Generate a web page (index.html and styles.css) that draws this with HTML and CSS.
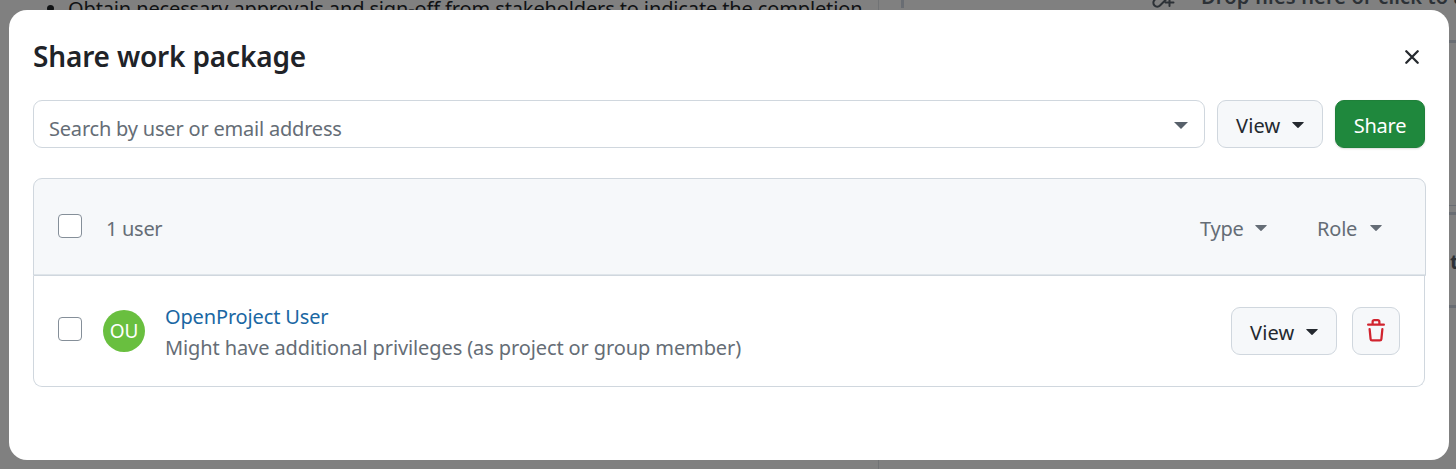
FILE: index.html
```
<!DOCTYPE html>
<html lang="en">
<head>
<meta charset="utf-8">
<title>Share work package</title>
<link rel="stylesheet" href="styles.css">
</head>
<body>
<div class="page">
  <div class="description">
    <ul class="description-list"><li><span class="description-text">Obtain necessary approvals and sign-off from stakeholders to indicate the completion</span></li></ul>
  </div>
  <div class="files">
    <div class="dropzone">
      <svg class="clip" width="26" height="26" viewBox="0 0 26 26" fill="none" stroke="currentColor" stroke-width="2" stroke-linecap="round"><path d="M14 8 L4.5 18 a3.8 3.8 0 0 0 5.5 5.5 L18 15.5 M19.5 17 v7 M15.5 20.5 h8"/></svg>
      <span class="drop-text">Drop files here or click to attach files</span>
    </div>
    <div class="rule rule-a"></div>
    <div class="rule rule-thin"></div>
    <div class="rule rule-b"></div>
    <div class="files-label">t</div>
    <div class="rule"></div>
  </div>
</div>

<div class="dialog" role="dialog" aria-label="Share work package">
  <header class="dialog-header">
    <h1 class="title"><span class="title-text">Share work package</span></h1>
    <button class="close" aria-label="Close">
      <svg width="14" height="14" viewBox="0 0 14 14" fill="none" stroke="currentColor" stroke-width="2.3" stroke-linecap="round"><path d="M1.3 1.3 L12.7 12.7 M12.7 1.3 L1.3 12.7"/></svg>
    </button>
  </header>

  <div class="invite">
    <div class="search">
      <span class="search-text">Search by user or email address</span>
      <svg class="search-caret" width="14" height="7" viewBox="0 0 14 7" fill="currentColor"><path d="M0 0 H14 L7 7 Z"/></svg>
    </div>
    <button class="button select"><span class="view-text">View</span><svg width="12" height="6" viewBox="0 0 12 6" fill="currentColor"><path d="M.6 0 H11.4 Q12 .3 11.6 .7 L6.5 5.8 Q6 6.2 5.5 5.8 L.4 .7 Q0 .3 .6 0 Z"/></svg></button>
    <button class="button primary"><span class="share-text">Share</span></button>
  </div>

  <div class="list-header">
    <span class="checkbox"></span>
    <span class="count">1 user</span>
    <div class="filters">
      <span class="filter"><span class="type-text">Type</span><svg width="12" height="6" viewBox="0 0 12 6" fill="currentColor"><path d="M.6 0 H11.4 Q12 .3 11.6 .7 L6.5 5.8 Q6 6.2 5.5 5.8 L.4 .7 Q0 .3 .6 0 Z"/></svg></span>
      <span class="filter"><span class="role-text">Role</span><svg width="12" height="6" viewBox="0 0 12 6" fill="currentColor"><path d="M.6 0 H11.4 Q12 .3 11.6 .7 L6.5 5.8 Q6 6.2 5.5 5.8 L.4 .7 Q0 .3 .6 0 Z"/></svg></span>
    </div>
  </div>
  <div class="list-row">
    <span class="checkbox"></span>
    <span class="avatar"><span class="initials">OU</span></span>
    <div class="person">
      <a class="name">OpenProject User</a>
      <span class="note">Might have additional privileges (as project or group member)</span>
    </div>
    <button class="button select"><span class="view-text">View</span><svg width="12" height="6" viewBox="0 0 12 6" fill="currentColor"><path d="M.6 0 H11.4 Q12 .3 11.6 .7 L6.5 5.8 Q6 6.2 5.5 5.8 L.4 .7 Q0 .3 .6 0 Z"/></svg></button>
    <button class="button remove" aria-label="Remove">
      <svg width="24" height="24" viewBox="0 0 16 16" fill="currentColor"><path d="M11 1.75V3h2.25a.75.75 0 0 1 0 1.5H2.75a.75.75 0 0 1 0-1.5H5V1.75C5 .784 5.784 0 6.75 0h2.5C10.216 0 11 .784 11 1.75ZM4.496 6.675l.66 6.6a.25.25 0 0 0 .249.225h5.19a.25.25 0 0 0 .249-.225l.66-6.6a.75.75 0 0 1 1.492.149l-.66 6.6A1.748 1.748 0 0 1 10.595 15h-5.19a1.75 1.75 0 0 1-1.741-1.575l-.66-6.6a.75.75 0 1 1 1.492-.15ZM6.5 1.75V3h3V1.75a.25.25 0 0 0-.25-.25h-2.5a.25.25 0 0 0-.25.25Z"/></svg>
    </button>
  </div>
</div>
</body>
</html>
```

FILE: styles.css
```
* { box-sizing: border-box; }
body {
  margin: 0;
  height: 469px;
  overflow: hidden;
  background: #808080;
  color: #1f2328;
  font: 20px/30px "Noto Sans", "Open Sans", sans-serif;
}
button { font: inherit; color: inherit; cursor: pointer; }
span, a { white-space: nowrap; }
svg { flex: none; }

.page { display: grid; grid-template-columns: 879px 1fr; height: 469px; overflow: hidden; }
.description { border-right: 1px solid #717375; color: #101214; }
.description-list { margin: -6px 0 0; padding-left: 68px; }
.description-text { letter-spacing: -0.13px; }
.files { padding-left: 22px; color: #2c3136; font-weight: 700; overflow: hidden; }
.dropzone { display: flex; align-items: flex-end; height: 8px; border-left: 3px solid #696d73; padding-left: 246px; }
.clip { margin-bottom: 0; }
.drop-text { margin: 0 0 -4px 25px; font-weight: 600; letter-spacing: 0.15px; }
.rule { height: 3px; background: #696d73; }
.rule-a { margin-top: 32px; }
.rule-thin { margin-top: 162px; height: 1px; }
.rule-b { margin-top: 6px; }
.files-label { height: 90px; padding: 32px 0 0 549px; }

.dialog {
  position: absolute;
  inset: 10px 7px 9px 9px;
  padding: 24px 24px 0;
  border-radius: 18px;
  background: #fff;
}
.dialog-header { display: flex; justify-content: space-between; height: 66px; }
.title { margin: 3px 0 0; font-size: 28px; line-height: 38px; font-weight: 600; }
.title-text { letter-spacing: -0.17px; }
.close { display: flex; margin: 16px 6px 0 0; padding: 0; border: 0; width: 14px; height: 14px; background: none; color: #25292e; }

.invite { display: flex; gap: 12px; height: 48px; }
.search {
  flex: 1;
  display: flex;
  align-items: center;
  justify-content: space-between;
  padding: 9px 16px 0 15px;
  border: 1px solid #d0d7de;
  border-radius: 9px;
  color: #656d76;
}
.search-text { letter-spacing: -0.2px; }
.search-caret { margin-top: -6px; color: #57606a; }
.button {
  display: flex;
  align-items: center;
  justify-content: space-between;
  height: 48px;
  padding: 4px 18px 0;
  border: 1px solid #d0d7de;
  border-radius: 9px;
  background: #f6f8fa;
  color: #24292f;
}
.button.select svg { margin-top: -2px; }
.select { width: 106px; }
.view-text { letter-spacing: 0.15px; }
.primary { width: 90px; padding: 4px 0 0; justify-content: center; border-color: #1f803a; background: #1f883d; color: #fff; box-shadow: 0 1px 2px rgba(31, 35, 40, .16); }
.share-text { letter-spacing: -0.2px; }
.remove { width: 48px; margin-left: 15px; padding: 0; justify-content: center; color: #d1242f; }

.list-header {
  display: flex;
  align-items: center;
  width: 1393px;
  height: 98px;
  margin-top: 30px;
  padding: 0 43px 0 24px;
  border: 1px solid #d0d7de;
  border-radius: 9px 9px 0 0;
  background: #f6f8fa;
  color: #656d76;
  box-shadow: inset 0 -1px #dfe5ea;
}
.checkbox { flex: none; width: 24px; height: 24px; margin-bottom: 2px; border: 1px solid #858f99; border-radius: 4px; background: #fff; }
.count { margin: 4px 0 0 24px; letter-spacing: -0.3px; }
.filters { display: flex; gap: 50px; margin-left: auto; padding-top: 4px; }
.filter { display: flex; align-items: center; justify-content: space-between; width: 67px; letter-spacing: -0.2px; }
.filter + .filter { width: 65px; }
.filter svg { margin-top: -2px; }

.list-row {
  display: flex;
  align-items: center;
  height: 111px;
  padding: 0 24px;
  border: 1px solid #d0d7de;
  border-top: 0;
  border-radius: 0 0 9px 9px;
}
.list-row .checkbox { margin-bottom: 4px; }
.avatar { display: flex; align-items: center; justify-content: center; width: 42px; height: 42px; margin-left: 21px; border-radius: 50%; background: #69bf3f; color: #fff; }
.initials { font-size: 19px; letter-spacing: -0.2px; }
.person { display: flex; flex-direction: column; flex: 1; margin: 1px 0 0 20px; line-height: 31px; }
.name { color: #1a67a3; align-self: flex-start; letter-spacing: -0.15px; }
.note { color: #656d76; align-self: flex-start; letter-spacing: -0.11px; }
```
